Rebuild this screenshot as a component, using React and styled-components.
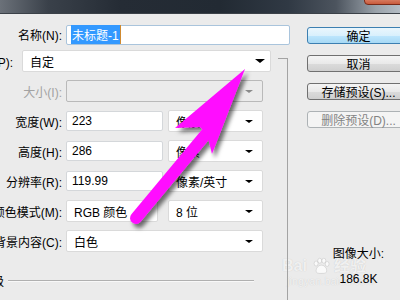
import React from 'react'
import styled, { createGlobalStyle, css } from 'styled-components'

const font = `"Liberation Sans", "Noto Sans CJK SC", sans-serif`

const Global = createGlobalStyle`
  html, body { margin:0; padding:0; background:#ebebeb; }
  body { font-family:${font}; font-size:12px; color:#000; }
`

const Dialog = styled.div`
  width:400px;
  height:300px;
  overflow:hidden;
  position:relative;
  display:flex;
  flex-direction:column;
  background:#ebebeb;
`

const TitleBar = styled.div`
  height:13px;
  flex:none;
  position:relative;
  background:linear-gradient(90deg,#6b7179 0%,#3a414a 12%,#252c35 30%,#222a33 55%,#303944 72%,#4c545e 84%,#9aa2aa 94%,#b4bcc4 100%);
  border-bottom:1px solid #3b4148;
`

const CloseBtn = styled.div`
  position:absolute;
  right:-4px;
  top:-6px;
  width:38px;
  height:9px;
  border:1px solid #7a2a18;
  border-radius:0 0 4px 4px;
  background:linear-gradient(#e8a088,#c85a3c);
`

const Body = styled.div`
  flex:1;
  display:flex;
`

const LeftPane = styled.div`
  width:288px;
  flex:none;
  padding-top:11px;
`

const Row = styled.div`
  display:flex;
  align-items:center;
  height:${p => p.h || 30}px;
`

const Label = styled.div`
  width:${p => p.w}px;
  margin-right:${p => p.gap || 4}px;
  flex:none;
  display:flex;
  justify-content:flex-end;
  white-space:nowrap;
  color:${p => (p.disabled ? '#a2a2a2' : '#000')};
`

const field = css`
  box-sizing:border-box;
  display:flex;
  align-items:center;
  flex:none;
  white-space:nowrap;
  border-radius:2px;
`

const TextInput = styled.div`
  ${field};
  width:${p => p.w}px;
  height:20px;
  padding-left:${p => p.pad || 5}px;
  background:#fff;
  border:1px solid ${p => (p.focus ? '#a9c4dc' : '#d4d7da')};
`

const Selected = styled.span`
  background:#3399ff;
  color:#fff;
  padding:1px;
  border-right:1px solid #d08a30;
`

const SelectBox = styled.div`
  ${field};
  width:${p => p.w}px;
  height:22px;
  margin-left:${p => p.ml || 0}px;
  justify-content:space-between;
  padding:0 ${p => p.pr || 9}px 0 7px;
  background:${p => (p.disabled ? '#ebebeb' : '#fff')};
  border:1px solid ${p => (p.disabled ? '#b9b9b9' : '#dadada')};
`

const Caret = styled.span`
  width:0;
  height:0;
  border-left:${p => p.s}px solid transparent;
  border-right:${p => p.s}px solid transparent;
  border-top:${p => p.s - 1}px solid ${p => (p.disabled ? '#8a8a8a' : '#000')};
`

const Group = styled.div`
  position:relative;
  margin-top:2px;
  &::before{
    content:'';
    position:absolute;
    right:0;
    top:12px;
    width:1px;
    height:300px;
    background:#a3a3a3;
  }
  &::after{
    content:'';
    position:absolute;
    right:0;
    top:12px;
    width:10px;
    height:1px;
    background:#a3a3a3;
  }
`

const Advanced = styled.div`
  display:flex;
  align-items:center;
  margin-top:16px;
`

const AdvLabel = styled.div`
  width:4px;
  display:flex;
  justify-content:flex-end;
  white-space:nowrap;
  margin-right:4px;
`

const AdvLine = styled.div`
  width:246px;
  height:1px;
  background:#b0b0b0;
  border-bottom:1px solid #f8f8f8;
`

const RightPane = styled.div`
  flex:1;
  padding:13px 0 0 19px;
  display:flex;
  flex-direction:column;
`

const Button = styled.div`
  width:103px;
  height:17px;
  box-sizing:border-box;
  margin-bottom:11px;
  display:flex;
  align-items:center;
  justify-content:center;
  white-space:nowrap;
  border-radius:3px;
  border:1px solid #707070;
  background:linear-gradient(#f4f4f4 0%,#e9e9e9 50%,#dbdbdb 51%,#cfcfcf 100%);
  ${p => p.primary && css`
    border-color:#3c7fb1;
    background:linear-gradient(#eaf6fd 0%,#d9f0fc 50%,#bee6fd 51%,#a7d9f5 100%);
  `}
  ${p => p.disabled && css`
    border-color:#adb2b5;
    background:#f4f4f4;
    color:#838383;
  `}
`

const Info = styled.div`
  width:103px;
  margin-top:108px;
  text-align:center;
  line-height:14px;
  position:relative;
  z-index:1;
`

const InfoValue = styled.div`
  margin-top:11px;
`

const Watermark = styled.div`
  position:absolute;
  left:282px;
  top:256px;
  color:rgba(255,255,255,0.75);
  text-shadow:0 0 1px rgba(0,0,0,0.18);
  font-family:${font};
`

const WmTop = styled.div`
  display:flex;
  align-items:center;
  font-size:16px;
  font-weight:bold;
  line-height:20px;
`

const WmSub = styled.div`
  font-size:10px;
  line-height:12px;
  margin-left:5px;
  letter-spacing:0.4px;
`

const ArrowLayer = styled.svg`
  position:absolute;
  left:0;
  top:0;
  pointer-events:none;
`

const Paw = () => (
  <svg width="20" height="18" viewBox="0 0 22 22" style={{ margin: '0 3px 0 4px' }}>
    <g fill="rgba(255,255,255,0.75)" stroke="rgba(0,0,0,0.15)" strokeWidth="0.8">
      <ellipse cx="5" cy="8" rx="2.4" ry="3" />
      <ellipse cx="9.5" cy="4.5" rx="2.4" ry="3" />
      <ellipse cx="14.5" cy="4.5" rx="2.4" ry="3" />
      <ellipse cx="18.5" cy="8.5" rx="2.3" ry="3" />
      <path d="M5 17c0-4 3-7 6.5-7s6.5 3 6.5 7c0 3-3 3-6.5 3S5 20 5 17z" />
    </g>
  </svg>
)

const Arrow = () => (
  <ArrowLayer width="400" height="300" viewBox="0 0 400 300">
    <defs>
      <filter id="sh" x="-20%" y="-20%" width="140%" height="140%">
        <feDropShadow dx="3" dy="4" stdDeviation="2" floodColor="#000" floodOpacity="0.55" />
      </filter>
    </defs>
    <g filter="url(#sh)" fill="#ff10ff">
      <line x1="136" y1="218" x2="206" y2="134" stroke="#ff10ff" strokeWidth="12" strokeLinecap="round" />
      <polygon points="245,69 175,128 200,127 207,134 212,154" />
    </g>
  </ArrowLayer>
)

export default function App() {
  return (
    <Dialog>
      <Global />
      <TitleBar>
        <CloseBtn />
      </TitleBar>
      <Watermark>
        <WmTop>
          Bai
          <Paw />
          经验
        </WmTop>
        <WmSub>jingyan.baidu.com</WmSub>
      </Watermark>
      <Body>
        <LeftPane>
          <Row h={19}>
            <Label w={62}>名称(N):</Label>
            <TextInput w={224} focus pad={4}>
              <Selected>未标题-1</Selected>
            </TextInput>
          </Row>
          <Group>
            <Row>
              <Label w={13} gap={9}>预设(P):</Label>
              <SelectBox w={249} pr={5}>
                自定
                <Caret s={5} />
              </SelectBox>
            </Row>
            <Row>
              <Label w={62} disabled>大小(I):</Label>
              <SelectBox w={197} disabled>
                <span />
                <Caret s={4} disabled />
              </SelectBox>
            </Row>
            <Row>
              <Label w={62}>宽度(W):</Label>
              <TextInput w={97}>223</TextInput>
              <SelectBox w={95} ml={5}>
                像素
                <Caret s={4} />
              </SelectBox>
            </Row>
            <Row>
              <Label w={62}>高度(H):</Label>
              <TextInput w={97}>286</TextInput>
              <SelectBox w={95} ml={5}>
                像素
                <Caret s={4} />
              </SelectBox>
            </Row>
            <Row>
              <Label w={62}>分辨率(R):</Label>
              <TextInput w={97}>119.99</TextInput>
              <SelectBox w={95} ml={5}>
                像素/英寸
                <Caret s={4} />
              </SelectBox>
            </Row>
            <Row>
              <Label w={62}>颜色模式(M):</Label>
              <SelectBox w={92}>
                RGB 颜色
                <Caret s={4} />
              </SelectBox>
              <SelectBox w={95} ml={10}>
                8 位
                <Caret s={4} />
              </SelectBox>
            </Row>
            <Row>
              <Label w={62}>背景内容(C):</Label>
              <SelectBox w={197}>
                白色
                <Caret s={4} />
              </SelectBox>
            </Row>
            <Advanced>
              <AdvLabel>高级</AdvLabel>
              <AdvLine />
            </Advanced>
          </Group>
        </LeftPane>
        <RightPane>
          <Button primary>确定</Button>
          <Button>取消</Button>
          <Button>存储预设(S)...</Button>
          <Button disabled>删除预设(D)...</Button>
          <Info>
            图像大小:
            <InfoValue>186.8K</InfoValue>
          </Info>
        </RightPane>
      </Body>
      <Arrow />
    </Dialog>
  )
}
